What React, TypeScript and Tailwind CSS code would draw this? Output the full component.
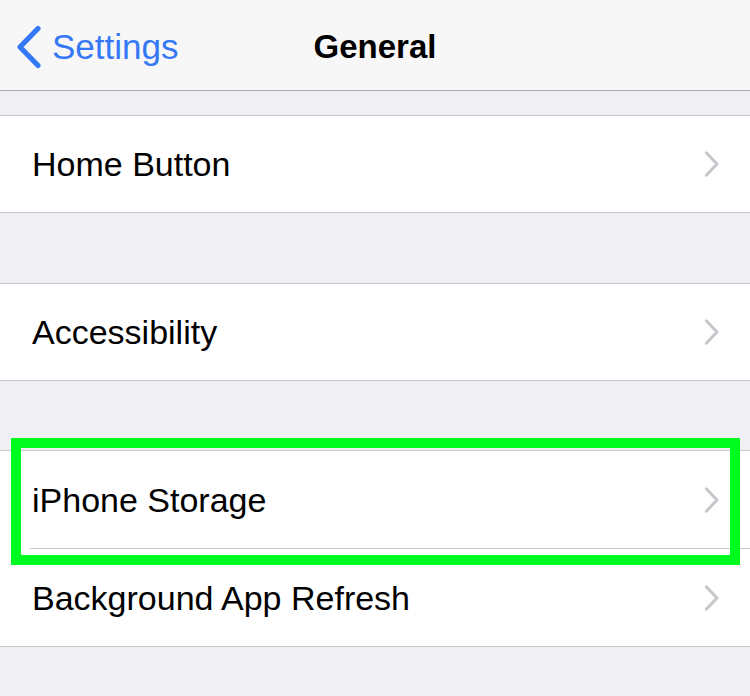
import React from "react";

const font = { fontFamily: '"Liberation Sans", Arial, sans-serif' };

function Chevron() {
  return (
    <svg width="16" height="26" viewBox="0 0 16 26" className="shrink-0">
      <path d="M2.5 2 L13 13 L2.5 24" fill="none" stroke="#c7c7cc" strokeWidth="3.2" strokeLinecap="round" strokeLinejoin="round" />
    </svg>
  );
}

function Row({ label, tall }: { label: string; tall?: boolean }) {
  return (
    <div className={`flex ${tall ? "h-[97px]" : "h-[96px]"} items-center justify-between bg-white pl-[32px] pr-[30px]`}>
      <span className="text-[34px] leading-none text-black" style={font}>{label}</span>
      <Chevron />
    </div>
  );
}

export default function App() {
  return (
    <div className="h-[696px] w-[750px] overflow-hidden bg-[#efeff4]" style={font}>
      <div className="relative flex h-[91px] items-center border-b border-[#a9a9ad] bg-[#f7f7f7]">
        <div className="flex items-center pl-[16px] pt-[3px]">
          <svg width="26" height="44" viewBox="0 0 26 44">
            <path d="M22 3.5 L4 22 L22 40.5" fill="none" stroke="#3478f6" strokeWidth="5.2" strokeLinecap="round" strokeLinejoin="round" />
          </svg>
          <span className="ml-[10px] text-[35px] leading-none text-[#3478f6]" style={font}>Settings</span>
        </div>
        <div className="absolute inset-x-0 flex justify-center pt-[3px]">
          <span className="text-[33px] font-bold leading-none text-black" style={font}>General</span>
        </div>
      </div>
      <div className="h-[24px]" />
      <div className="border-y border-[#c8c7cc]">
        <Row label="Home Button" />
      </div>
      <div className="h-[70px]" />
      <div className="border-y border-[#c8c7cc]">
        <Row label="Accessibility" />
      </div>
      <div className="h-[69px]" />
      <div className="relative border-y border-[#c8c7cc]">
        <Row label="iPhone Storage" tall />
        <div className="bg-white pl-[30px]">
          <div className="h-px bg-[#c8c7cc]" />
        </div>
        <Row label="Background App Refresh" tall />
        <div className="pointer-events-none absolute left-[11px] top-[-13px] h-[127px] w-[729px] border-[10px] border-[#00fb1e]" />
      </div>
    </div>
  );
}
